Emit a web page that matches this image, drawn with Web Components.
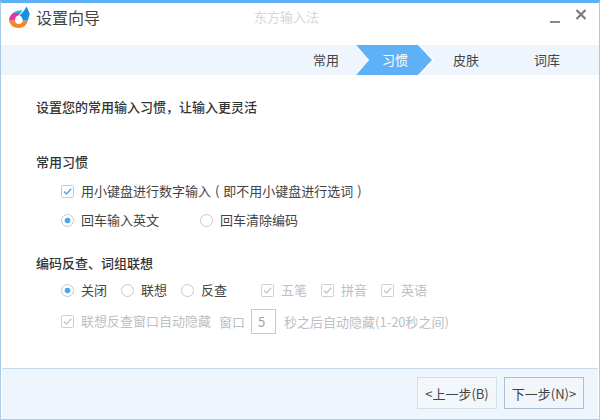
<!DOCTYPE html>
<html lang="zh">
<head>
<meta charset="utf-8">
<title>设置向导</title>
<style>
html, body { margin: 0; padding: 0; background: #fff; }
body { font-family: "Noto Sans CJK SC", "Liberation Sans", sans-serif; font-size: 13px; color: #444; }
</style>
</head>
<body>
<template id="title-bar-tpl">
  <style>
    :host { display: flex; align-items: center; height: 42px; box-sizing: border-box; padding-bottom: 14px; position: relative; }
    svg.logo { width: 22px; height: 22px; margin-left: 7px; }
    .title { margin-left: 6px; font-size: 16px; color: #444; line-height: 22px; }
    .center { position: absolute; left: 253px; top: 4px; font-size: 13px; line-height: 20px; color: #d6d6d6; }
    .controls { margin-left: auto; display: flex; align-items: center; gap: 15px; margin-right: 12px; }
  </style>
  <svg class="logo" viewBox="0 0 22 22">
    <path d="M1 14.5 L7 14.5 C7 17 9 18 11 18 C13 18 14.8 16.5 14.8 14.5 L19.8 14.5 C19 19 15.5 22 10.5 22 C5.5 22 1.8 19 1 14.5Z" fill="#f7861e"/>
    <path d="M1 14.5 C1 11.5 2.5 9 5 7 L12.5 7 L10.5 9.4 C8 9.6 7 12 7 14.5Z" fill="#e5389a"/>
    <path d="M5 7 C6.5 5.5 9 4.5 11 4.5 L14.8 4.5 L12.5 7Z" fill="#2cb5e8"/>
    <path d="M18.7 .5 L21.8 8 L19.8 14.5 L14.8 14.5 C14.8 12.5 13.5 10.5 11.5 9.6 L15.6 5.2Z" fill="#1a8fe0"/>
  </svg>
  <span class="title"><slot name="title"></slot></span>
  <span class="center"><slot name="app"></slot></span>
  <span class="controls">
    <svg width="10" height="11" viewBox="0 0 10 11" style="margin-top:6px"><rect x="0" y="6" width="10" height="2" fill="#8a8a8a"/></svg>
    <svg width="12" height="12" viewBox="0 0 12 12" style="margin-top:-6px"><path d="M1.5 2 L10.5 11 M10.5 2 L1.5 11" stroke="#7c7c7c" stroke-width="2.2" fill="none"/></svg>
  </span>
</template>

<template id="step-tab-tpl">
  <style>
    :host { display: flex; align-items: center; justify-content: center; height: 30px; color: #444; box-sizing: border-box; line-height: 30px; }
    :host([active]) { color: #fff; background: #fff; clip-path: polygon(0 0, 63px 0, 78px 15px, 63px 30px, 0 30px, 13px 15px); position: relative; }
    :host([active]) .chev { position: absolute; inset: 0; background: #5eb0f7; clip-path: polygon(0 0, 62px 0, 76px 15px, 62px 30px, 0 30px, 13px 15px); }
    span.text { position: relative; }
  </style>
  <div class="chev"></div>
  <span class="text"><slot></slot></span>
</template>

<template id="step-tabs-tpl">
  <style>
    :host { display: flex; height: 30px; background: #eef5fc; padding-left: 290px; }
  </style>
  <slot></slot>
</template>

<template id="check-box-tpl">
  <style>
    :host { display: inline-flex; align-items: center; gap: 7px; height: 20px; line-height: 20px; color: #444; white-space: nowrap; }
    :host([disabled]) { color: #bbc0c6; }
    svg { width: 13px; height: 13px; flex: none; }
    .box { stroke: #c8c8c8; fill: #fff; }
    .tick { stroke: #4ba3ef; }
    :host([disabled]) .box { stroke: #d0d0d0; }
    :host([disabled]) .tick { stroke: #c8c8c8; }
  </style>
  <svg viewBox="0 0 13 13">
    <rect class="box" x=".5" y=".5" width="12" height="12" rx="1"/>
    <path class="tick" d="M3 6.5 L5.6 9 L10.2 3.8" fill="none" stroke-width="1.4"/>
  </svg>
  <span><slot></slot></span>
</template>

<template id="radio-button-tpl">
  <style>
    :host { display: inline-flex; align-items: center; gap: 7px; height: 20px; line-height: 20px; color: #444; white-space: nowrap; }
    svg { width: 13px; height: 13px; flex: none; }
    .dot { display: none; fill: #4ba3ef; }
    :host([checked]) .dot { display: inline; }
  </style>
  <svg viewBox="0 0 13 13">
    <circle cx="6.5" cy="6.5" r="6" fill="#fff" stroke="#c8c8c8"/>
    <circle class="dot" cx="6.5" cy="6.5" r="2.8"/>
  </svg>
  <span><slot></slot></span>
</template>

<template id="form-group-tpl">
  <style>
    :host { display: block; }
    h3 { margin: 0; font-size: 13px; font-weight: 500; line-height: 20px; color: #333; }
    .rows { display: flex; flex-direction: column; padding-left: 25px; margin-top: var(--rows-top, 9px); gap: var(--rows-gap, 9px); }
  </style>
  <h3><slot name="heading"></slot></h3>
  <div class="rows"><slot></slot></div>
</template>

<template id="option-row-tpl">
  <style>
    :host { display: flex; align-items: center; height: 20px; color: #bbc0c6; white-space: nowrap; }
  </style>
  <slot></slot>
</template>

<template id="number-box-tpl">
  <style>
    :host { display: inline-block; width: 25px; height: 25px; box-sizing: border-box; border: 1px solid #c8c8c8; line-height: 23px; padding-left: 6px; color: #a5a5a5; background: #fff; font-size: 13px; }
  </style>
  <slot></slot>
</template>

<template id="nav-button-tpl">
  <style>
    :host { display: inline-flex; align-items: center; justify-content: center; width: 80px; height: 32px; box-sizing: border-box; border: 1px solid #d2dfeb; background: #f2f7fc; color: #444; font-size: 13px; white-space: nowrap; }
    :host([primary]) { border-color: #a9c0d6; background: #f2f6fb; }
  </style>
  <slot></slot>
</template>

<template id="wizard-window-tpl">
  <style>
    :host { display: flex; flex-direction: column; width: 600px; height: 420px; box-sizing: border-box; border: 1px solid #a9cbea; border-top: 3px solid #5eb0f7; border-bottom-color: #b5cce0; background: #fff; overflow: hidden; }
    main { flex: 1; padding: 22px 0 0 35px; box-sizing: border-box; }
    footer { height: 51px; margin: 0 1px; box-sizing: border-box; background: #eef5fc; border-top: 1px solid #c6d9ec; display: flex; justify-content: flex-end; align-items: flex-start; gap: 7px; padding: 8px 14px 0 0; }
  </style>
  <slot name="title"></slot>
  <slot name="steps"></slot>
  <main><slot></slot></main>
  <footer><slot name="buttons"></slot></footer>
</template>

<wizard-window>
  <title-bar slot="title">
    <span slot="title">设置向导</span>
    <span slot="app">东方输入法</span>
  </title-bar>
  <step-tabs slot="steps">
    <step-tab style="width:65px;padding-left:5px">常用</step-tab>
    <step-tab active style="width:78px">习惯</step-tab>
    <step-tab style="width:64px">皮肤</step-tab>
    <step-tab style="width:98px">词库</step-tab>
  </step-tabs>

  <intro-line>设置您的常用输入习惯，让输入更灵活</intro-line>

  <form-group style="margin-top:35px">
    <span slot="heading">常用习惯</span>
    <option-row><check-box checked style="word-spacing:1px">用小键盘进行数字输入 ( 即不用小键盘进行选词 )</check-box></option-row>
    <option-row>
      <radio-button checked>回车输入英文</radio-button>
      <radio-button style="margin-left:41px">回车清除编码</radio-button>
    </option-row>
  </form-group>

  <form-group style="margin-top:23px;--rows-top:7px;--rows-gap:11px">
    <span slot="heading">编码反查、词组联想</span>
    <option-row>
      <radio-button checked>关闭</radio-button>
      <radio-button style="margin-left:14px">联想</radio-button>
      <radio-button style="margin-left:14px">反查</radio-button>
      <check-box disabled style="margin-left:34px">五笔</check-box>
      <check-box disabled style="margin-left:14px">拼音</check-box>
      <check-box disabled style="margin-left:14px">英语</check-box>
    </option-row>
    <option-row>
      <check-box disabled>联想反查窗口自动隐藏</check-box>
      <span style="margin-left:8px">窗口</span>
      <number-box style="margin-left:6px">5</number-box>
      <span style="margin-left:8px">秒之后自动隐藏(1-20秒之间)</span>
    </option-row>
  </form-group>

  <nav-button slot="buttons">&lt;上一步(B)</nav-button>
  <nav-button slot="buttons" primary>下一步(N)&gt;</nav-button>
</wizard-window>

<script>
// all of these are just a template stamped into an open shadow root
const plain = (tag, tplId) => {
  customElements.define(tag, class extends HTMLElement {
    constructor() {
      super();
      const tpl = document.getElementById(tplId);
      this.attachShadow({ mode: "open" }).appendChild(tpl.content.cloneNode(true));
    }
  });
};

plain("title-bar", "title-bar-tpl");
plain("step-tab", "step-tab-tpl");
plain("step-tabs", "step-tabs-tpl");
plain("check-box", "check-box-tpl");
plain("radio-button", "radio-button-tpl");
plain("form-group", "form-group-tpl");
plain("option-row", "option-row-tpl");
plain("number-box", "number-box-tpl");
plain("nav-button", "nav-button-tpl");
plain("wizard-window", "wizard-window-tpl");

class IntroLine extends HTMLElement {
  constructor() {
    super();
    this.attachShadow({ mode: "open" }).innerHTML = `<style>
      :host { display: block; font-weight: 500; line-height: 20px; color: #333; }
    </style><slot></slot>`;
  }
}
customElements.define("intro-line", IntroLine);
</script>
</body>
</html>
